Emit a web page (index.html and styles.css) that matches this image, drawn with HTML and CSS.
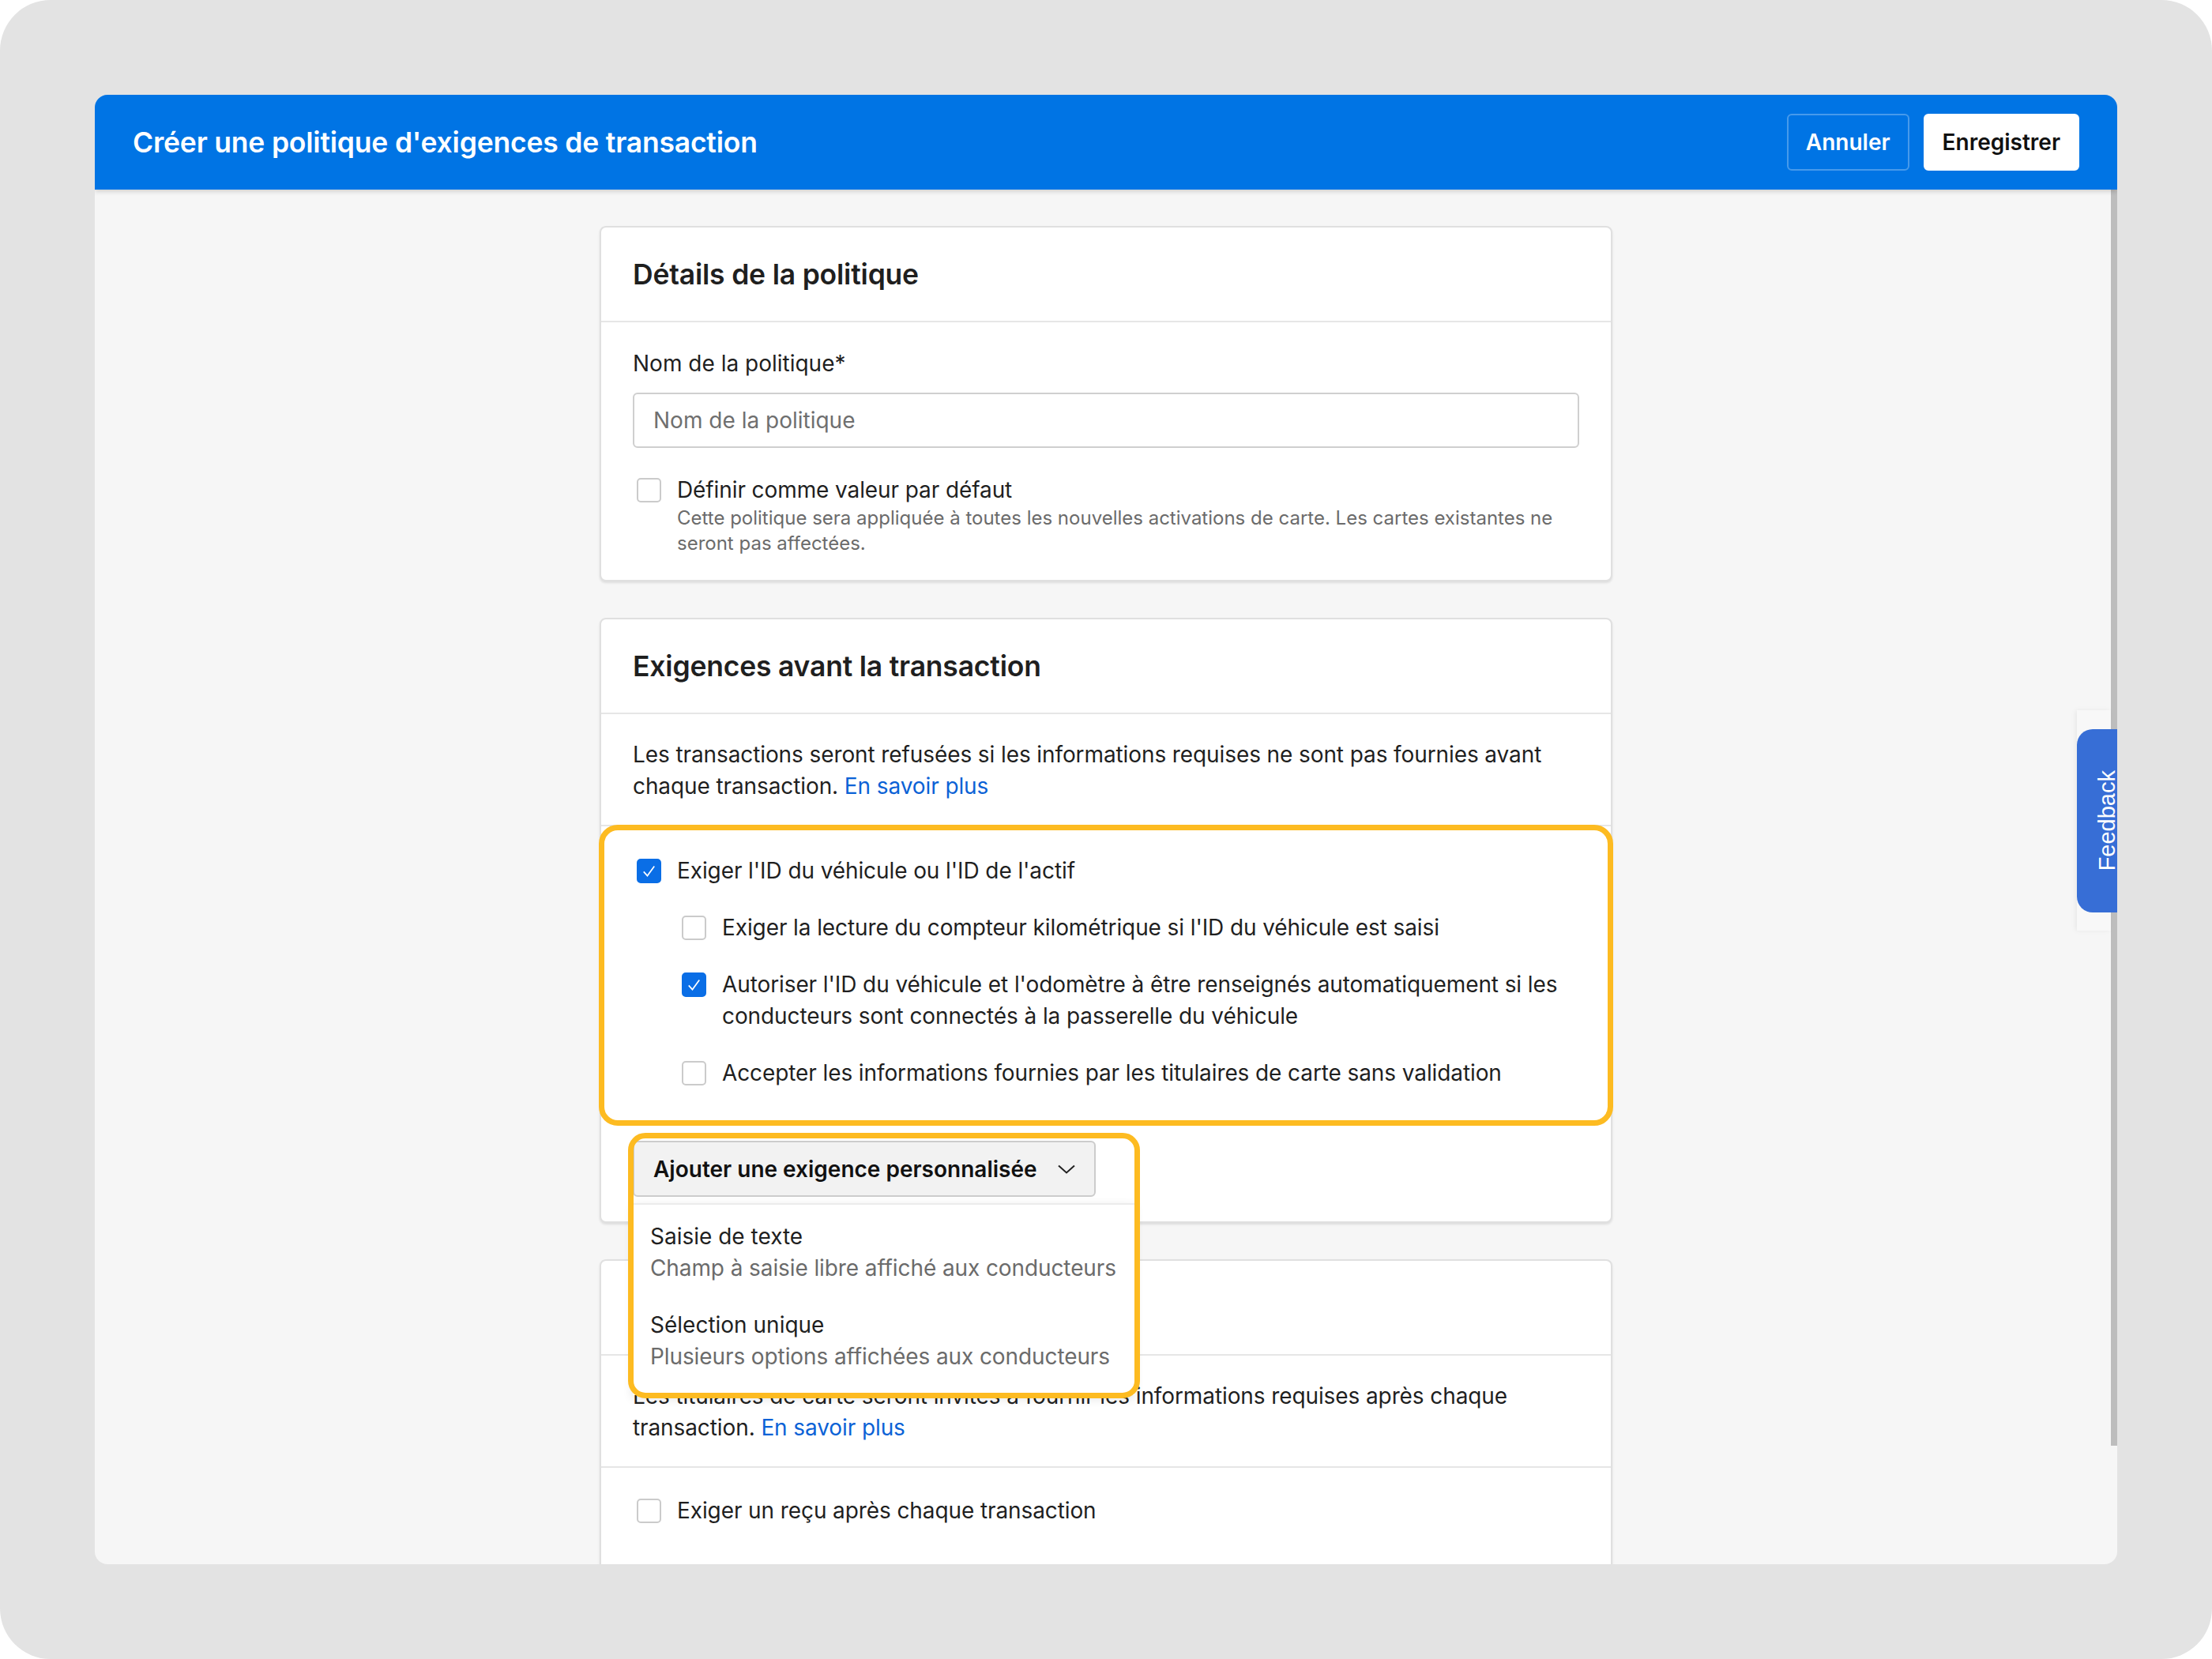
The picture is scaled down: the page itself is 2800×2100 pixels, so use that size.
FILE: index.html
```html
<!DOCTYPE html>
<html lang="fr">
<head>
    <meta charset="UTF-8">
    <meta name="viewport" content="width=device-width, initial-scale=1.0">
    <title>Créer une politique d'exigences de transaction</title>
    <link rel="stylesheet" href="styles.css">
</head>
<body>
    <div class="frame">
        <div class="window">
            <!-- Barre du haut -->
            <header class="topbar">
                <h1 class="topbar-title">Créer une politique d'exigences de transaction</h1>
                <div class="topbar-actions">
                    <button class="btn btn-ghost">Annuler</button>
                    <button class="btn btn-light">Enregistrer</button>
                </div>
            </header>

            <main class="content">
                <!-- Détails -->
                <section class="card">
                    <div class="card-head">Détails de la politique</div>
                    <div class="card-body">
                        <label class="field-label" for="policyName">Nom de la politique*</label>
                        <input class="field-input" id="policyName" type="text" placeholder="Nom de la politique">
                        <div class="opt opt-default">
                            <span class="check"></span>
                            <div>
                                <div class="opt-label">Définir comme valeur par défaut</div>
                                <div class="opt-help">Cette politique sera appliquée à toutes les nouvelles activations de carte. Les cartes existantes ne seront pas affectées.</div>
                            </div>
                        </div>
                    </div>
                </section>

                <!-- Avant la transaction -->
                <section class="card">
                    <div class="card-head">Exigences avant la transaction</div>
                    <div class="card-text">
                        Les transactions seront refusées si les informations requises ne sont pas fournies avant chaque transaction. <a href="#" class="link">En savoir plus</a>
                    </div>
                    <div class="opt-group">
                        <div class="opt">
                            <span class="check on"><svg viewBox="0 0 16 16"><path d="M4 8.5 L6.8 11.6 L12 4.4"/></svg></span>
                            <div class="opt-label">Exiger l'ID du véhicule ou l'ID de l'actif</div>
                        </div>
                        <div class="opt sub">
                            <span class="check"></span>
                            <div class="opt-label">Exiger la lecture du compteur kilométrique si l'ID du véhicule est saisi</div>
                        </div>
                        <div class="opt sub">
                            <span class="check on"><svg viewBox="0 0 16 16"><path d="M4 8.5 L6.8 11.6 L12 4.4"/></svg></span>
                            <div class="opt-label">Autoriser l'ID du véhicule et l'odomètre à être renseignés automatiquement si les conducteurs sont connectés à la passerelle du véhicule</div>
                        </div>
                        <div class="opt sub">
                            <span class="check"></span>
                            <div class="opt-label">Accepter les informations fournies par les titulaires de carte sans validation</div>
                        </div>
                    </div>
                    <div class="card-foot">
                        <div class="dropdown">
                            <button class="dropdown-btn">
                                Ajouter une exigence personnalisée
                                <svg class="chevron" viewBox="0 0 22 12"><path d="M1 1.5 L11 10.5 L21 1.5"/></svg>
                            </button>
                            <div class="dropdown-menu">
                                <div class="menu-item">
                                    <div class="menu-title">Saisie de texte</div>
                                    <div class="menu-desc">Champ à saisie libre affiché aux conducteurs</div>
                                </div>
                                <div class="menu-item">
                                    <div class="menu-title">Sélection unique</div>
                                    <div class="menu-desc">Plusieurs options affichées aux conducteurs</div>
                                </div>
                            </div>
                            <div class="mark-menu"></div>
                        </div>
                    </div>
                </section>

                <!-- Après la transaction -->
                <section class="card">
                    <div class="card-head">Exigences après la transaction</div>
                    <div class="card-text">
                        Les titulaires de carte seront invités à fournir les informations requises après chaque transaction. <a href="#" class="link">En savoir plus</a>
                    </div>
                    <div class="card-body card-body-last">
                        <div class="opt">
                            <span class="check"></span>
                            <div class="opt-label">Exiger un reçu après chaque transaction</div>
                        </div>
                    </div>
                </section>
            </main>

            <div class="scrollbar"></div>

            <!-- Onglet feedback -->
            <div class="feedback-back"></div>
            <div class="feedback-tab"><span>Feedback</span></div>
        </div>
    </div>
</body>
</html>
```

FILE: styles.css
```css
/* Page */
body {
    margin: 0;
    background-color: #ffffff;
    font-family: "Inter", "Noto Sans", sans-serif;
    color: #1f1f1f;
}

.frame {
    width: 2800px;
    height: 2100px;
    padding: 120px;
    box-sizing: border-box;
    background-color: #e3e3e3;
    border-radius: 64px;
}

.window {
    position: relative;
    height: 1860px;
    display: flex;
    flex-direction: column;
    background-color: #f6f6f6;
    border-radius: 16px;
    overflow: hidden;
}

/* Barre du haut */
.topbar {
    height: 120px;
    flex-shrink: 0;
    display: flex;
    align-items: center;
    justify-content: space-between;
    padding: 0 48px;
    background-color: #0074e4;
    box-shadow: 0 2px 6px rgba(0, 0, 0, 0.18);
    position: relative;
    z-index: 2;
}

.topbar-title {
    margin: 0;
    color: #ffffff;
    font-size: 35.5px;
    font-weight: 600;
    letter-spacing: -0.2px;
}

.topbar-actions {
    display: flex;
    gap: 18px;
}

.btn {
    height: 72px;
    padding: 0 22px;
    border-radius: 6px;
    font-family: inherit;
    font-size: 28px;
    font-weight: 600;
    cursor: pointer;
}

.btn-ghost {
    color: #ffffff;
    background-color: transparent;
    border: 2px solid rgba(255, 255, 255, 0.28);
}

.btn-light {
    color: #111111;
    background-color: #ffffff;
    border: 2px solid #ffffff;
}

/* Contenu */
.content {
    flex: 1;
    display: flex;
    flex-direction: column;
    align-items: center;
    gap: 46px;
    padding-top: 46px;
}

.card {
    width: 1282px;
    flex-shrink: 0;
    box-sizing: border-box;
    background-color: #ffffff;
    border: 2px solid #e0e0e0;
    border-radius: 8px;
    box-shadow: 0 2px 3px rgba(0, 0, 0, 0.1);
}

.card-head {
    height: 118px;
    display: flex;
    align-items: center;
    padding: 0 40px;
    border-bottom: 2px solid #e6e6e6;
    font-size: 35.5px;
    font-weight: 600;
    letter-spacing: -0.2px;
}

.card-body {
    padding: 32px 40px 30px;
}

.card-body-last {
    padding-top: 34px;
    padding-bottom: 120px;
}

.card-text {
    padding: 31px 40px 29px;
    font-size: 28px;
    line-height: 40px;
    letter-spacing: -0.1px;
    border-bottom: 2px solid #e6e6e6;
}

.link {
    color: #0b62d6;
    text-decoration: none;
}

/* Champ texte */
.field-label {
    display: block;
    font-size: 28px;
    line-height: 40px;
}

.field-input {
    display: block;
    width: 100%;
    height: 70px;
    box-sizing: border-box;
    margin: 17px 0 33px;
    padding: 0 24px;
    border: 2px solid #cfcfcf;
    border-radius: 6px;
    font-family: inherit;
    font-size: 28px;
    color: #1f1f1f;
}

.field-input::placeholder {
    color: #6f6f6f;
}

/* Cases à cocher */
.opt {
    display: flex;
    align-items: flex-start;
    gap: 20px;
}

.opt.sub {
    margin-left: 57px;
}

.check {
    width: 31px;
    height: 31px;
    flex-shrink: 0;
    box-sizing: border-box;
    margin: 5px 0 0 5px;
    border: 2px solid #cbcbcb;
    border-radius: 5px;
    background-color: #ffffff;
    display: flex;
    align-items: center;
    justify-content: center;
}

.check.on {
    background-color: #0a6ee6;
    border-color: #0a6ee6;
}

.check svg {
    width: 29px;
    height: 29px;
    fill: none;
    stroke: #ffffff;
    stroke-width: 1;
}

.opt-label {
    font-size: 28px;
    line-height: 40px;
    letter-spacing: -0.1px;
}

.opt-help {
    font-size: 24px;
    line-height: 32px;
    color: #6b6b6b;
}

.opt-group {
    position: relative;
    display: flex;
    flex-direction: column;
    gap: 32px;
    padding: 36px 40px 47px;
}

/* Encadré jaune */
.opt-group::after {
    content: "";
    position: absolute;
    top: -2px;
    left: -3px;
    right: -3px;
    bottom: 0;
    border: 7px solid #fdbb21;
    border-radius: 24px;
    pointer-events: none;
}

/* Menu déroulant */
.card-foot {
    padding: 19px 40px 31px;
}

.dropdown {
    position: relative;
    width: 635px;
}

.dropdown-btn {
    height: 71px;
    display: inline-flex;
    align-items: center;
    gap: 26px;
    padding: 0 24px;
    background-color: #f2f2f2;
    border: 2px solid #cccccc;
    border-radius: 6px;
    font-family: inherit;
    font-size: 28px;
    font-weight: 600;
    color: #111111;
}

.chevron {
    width: 22px;
    height: 12px;
    fill: none;
    stroke: #222222;
    stroke-width: 2;
}

.dropdown-menu {
    position: absolute;
    top: 79px;
    left: 0;
    width: 635px;
    height: 243px;
    box-sizing: border-box;
    padding: 4px 0;
    background-color: #ffffff;
    border-top: 2px solid #ececec;
    box-shadow: 0 4px 12px rgba(0, 0, 0, 0.12);
    z-index: 5;
}

.menu-item {
    padding: 16px 0 16px 22px;
    white-space: nowrap;
}

.menu-title {
    font-size: 28px;
    line-height: 40px;
    color: #1f1f1f;
}

.menu-desc {
    font-size: 28px;
    line-height: 40px;
    letter-spacing: -0.1px;
    color: #6b6b6b;
}

.mark-menu {
    position: absolute;
    top: -10px;
    left: -6px;
    width: 648px;
    height: 336px;
    box-sizing: border-box;
    border: 7px solid #fdbb21;
    border-radius: 22px;
    z-index: 6;
    pointer-events: none;
}

/* Barre de défilement */
.scrollbar {
    position: absolute;
    top: 120px;
    right: 0;
    width: 8px;
    height: 1590px;
    background-color: #bdbdbd;
}

/* Onglet feedback */
.feedback-back {
    position: absolute;
    top: 779px;
    right: 8px;
    width: 43px;
    height: 279px;
    background-color: #f8f8f8;
    box-shadow: -2px 0 6px rgba(0, 0, 0, 0.06);
}

.feedback-tab {
    position: absolute;
    top: 803px;
    right: 0;
    width: 51px;
    height: 232px;
    box-sizing: border-box;
    padding-left: 24px;
    display: flex;
    align-items: center;
    background-color: #376ed6;
    border-radius: 20px 0 0 20px;
}

.feedback-tab span {
    writing-mode: vertical-rl;
    transform: rotate(180deg);
    font-family: "Liberation Sans", Arial, sans-serif;
    font-size: 29px;
    line-height: 28px;
    color: #ffffff;
}
```
